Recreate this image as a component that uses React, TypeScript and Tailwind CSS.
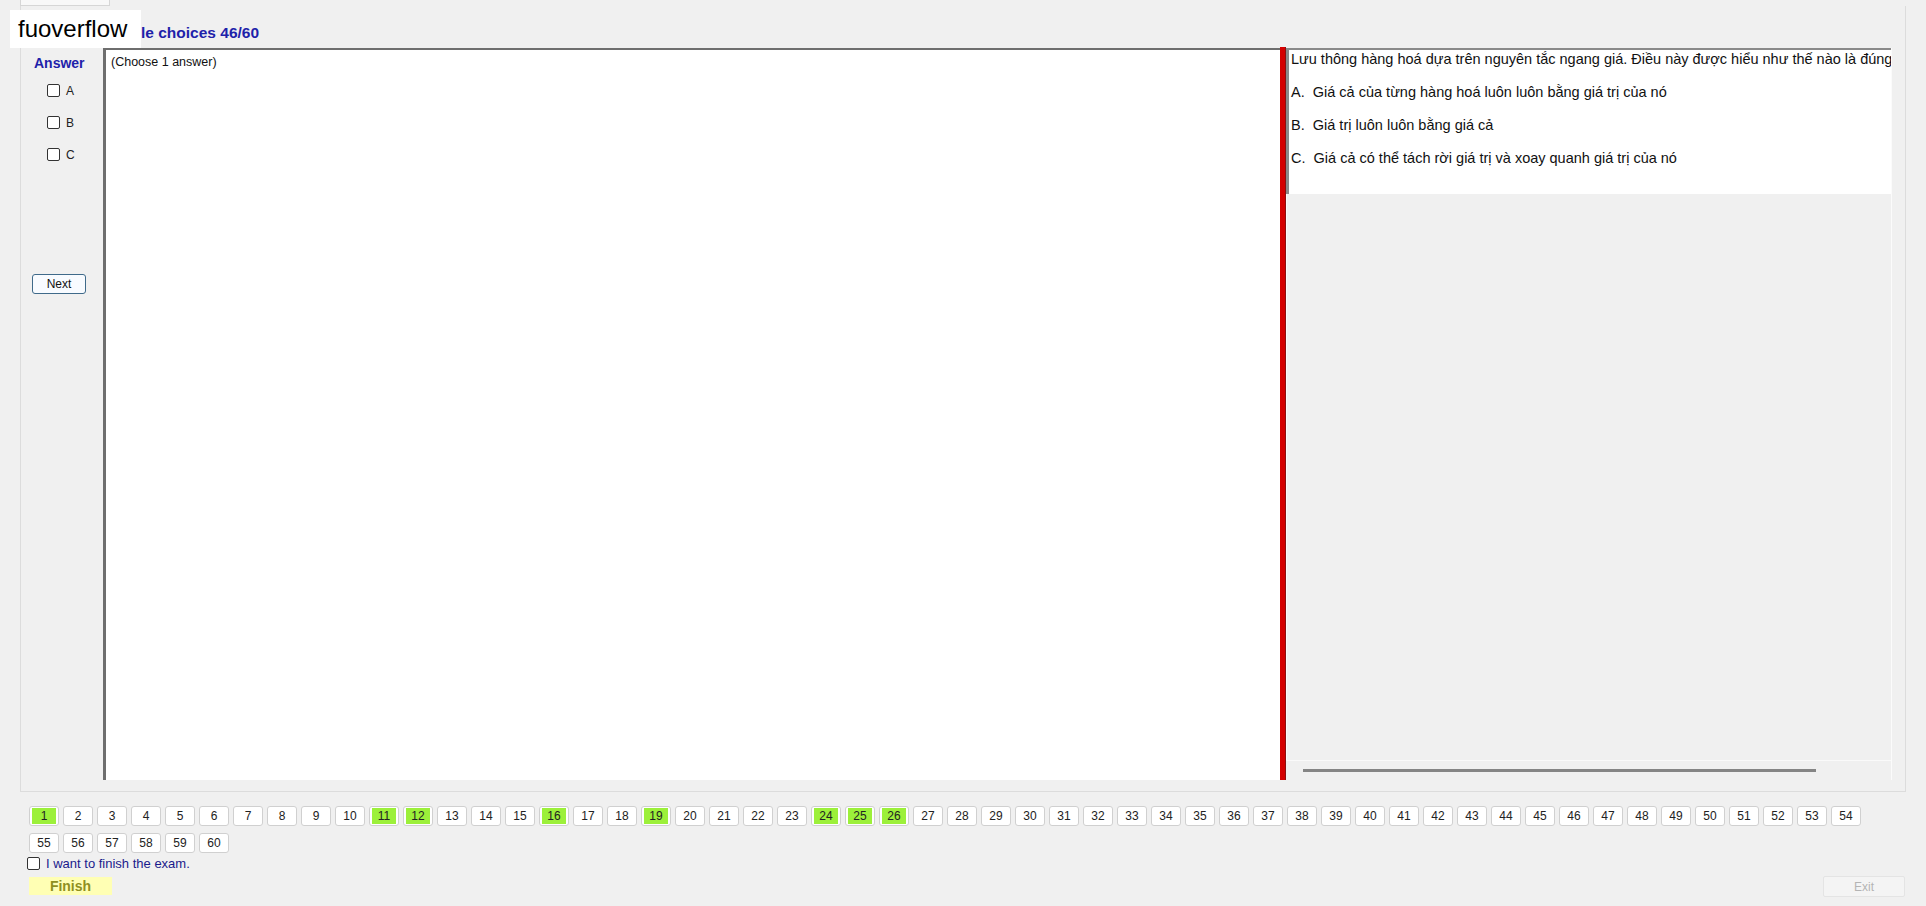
import React from "react";

const ANSWERED = new Set([1, 11, 12, 16, 19, 24, 25, 26]);
const QUESTION_COUNT = 60;

const question = {
  text: "Lưu thông hàng hoá dựa trên nguyên tắc ngang giá. Điều này được hiểu như thế nào là đúng?",
  options: [
    { key: "A", text: "Giá cả của từng hàng hoá luôn luôn bằng giá trị của nó" },
    { key: "B", text: "Giá trị luôn luôn bằng giá cả" },
    { key: "C", text: "Giá cả có thể tách rời giá trị và xoay quanh giá trị của nó" },
  ],
};

function Box() {
  return <span className="block h-[13px] w-[13px] shrink-0 rounded-[2px] border border-[#333] bg-white" />;
}

function AnswerColumn() {
  return (
    <div className="flex w-[82px] shrink-0 flex-col items-start">
      <p className="ml-[13px] mt-[7px] text-[14px] font-bold leading-[16px] text-[#1e22aa]">Answer</p>
      <div className="mt-[13px] flex w-full flex-col gap-[19px] pl-[26px]">
        {question.options.map((o) => (
          <label key={o.key} className="flex h-[13px] items-center gap-[6px] text-[12px] text-[#222]">
            <Box />
            {o.key}
          </label>
        ))}
      </div>
      <button className="ml-[11px] mt-[113px] h-[20px] w-[54px] rounded-[3px] border border-[#3f6a8a] bg-[#f8fbff] text-[12px] leading-none text-[#111]">
        Next
      </button>
    </div>
  );
}

function QuestionPanel() {
  return (
    <div className="flex w-[606px] shrink-0 flex-col border-r border-[#fbfbfb]">
      <div className="h-[146px] overflow-hidden whitespace-nowrap border-l-[3px] border-t-2 border-[#8a8a8a] bg-white pl-[2px] pt-[1px] text-[14.5px] leading-[16px] text-[#111]">
        <p>{question.text}</p>
        {question.options.map((o) => (
          <p key={o.key} className="mt-[17px]">
            {o.key}.&nbsp; {o.text}
          </p>
        ))}
      </div>
      <div className="flex-1 border-l border-[#fafafa]" />
      <div className="flex h-[20px] items-center border-t border-[#fafafa] pl-[17px]">
        <div className="h-[3px] w-[513px] bg-[#858585]" />
      </div>
    </div>
  );
}

function QuestionNav() {
  return (
    <div className="flex w-[1836px] flex-wrap gap-x-[4px] gap-y-[7px]">
      {Array.from({ length: QUESTION_COUNT }, (_, i) => i + 1).map((n) => (
        <button
          key={n}
          className="flex h-[20px] w-[30px] items-center justify-center rounded-[3px] border border-[#d0d0d0] bg-white px-[2px] py-[1px] text-[12px] leading-none text-[#222]"
        >
          <span className={"flex h-full w-full items-center justify-center " + (ANSWERED.has(n) ? "bg-[#9cf03a]" : "")}>
            {n}
          </span>
        </button>
      ))}
    </div>
  );
}

export default function App() {
  return (
    <div className="relative h-[906px] w-[1926px] overflow-hidden bg-[#f0f0f0] font-['Liberation_Sans',Arial,sans-serif] text-[#111]">
      {/* tab header */}
      <div className="h-[6px]">
        <div className="ml-[20px] h-[6px] w-[90px] border-x border-b border-[#d6d6d6] bg-[#f8f8f8]" />
      </div>

      {/* exam panel */}
      <div className="ml-[20px] flex h-[786px] w-[1886px] flex-col border-x border-b border-[#dcdcdc]">
        <div className="flex h-[42px] items-center pl-[120px] pt-[11px]">
          <h1 className="text-[15.5px] font-bold text-[#1e22aa]">le choices 46/60</h1>
        </div>
        <div className="flex h-[732px]">
          <AnswerColumn />
          <div className="w-[1177px] shrink-0 border-l-[3px] border-t-2 border-[#6e6e6e] bg-white pl-[5px] pt-[3px] text-[12.5px] text-[#111]">
            (Choose 1 answer)
          </div>
          <div className="-mt-[1px] w-[6px] shrink-0 border-r border-[#8a1010] bg-[#d40000]" />
          <QuestionPanel />
        </div>
      </div>

      {/* footer: navigation and finish */}
      <div className="pl-[29px] pt-[14px]">
        <QuestionNav />
        <label className="-ml-[2px] mt-[4px] flex h-[13px] items-center gap-[6px] text-[13px] text-[#1a1a8c]">
          <Box />
          I want to finish the exam.
        </label>
        <div className="mt-[6px] flex items-start justify-between pr-[21px]">
          <button className="mt-[1px] h-[18px] w-[83px] bg-[#ffffb4] text-[14px] font-bold leading-none text-[#8f8f1f]">
            Finish
          </button>
          <button className="h-[21px] w-[82px] rounded-[2px] border border-[#e4e4e4] bg-[#f4f4f4] text-[12px] text-[#b4b4b4]">
            Exit
          </button>
        </div>
      </div>

      {/* watermark */}
      <div className="absolute left-[10px] top-[10px] flex h-[38px] w-[131px] items-center bg-white pl-[8px] text-[24px] leading-none text-black">
        fuoverflow
      </div>
    </div>
  );
}
